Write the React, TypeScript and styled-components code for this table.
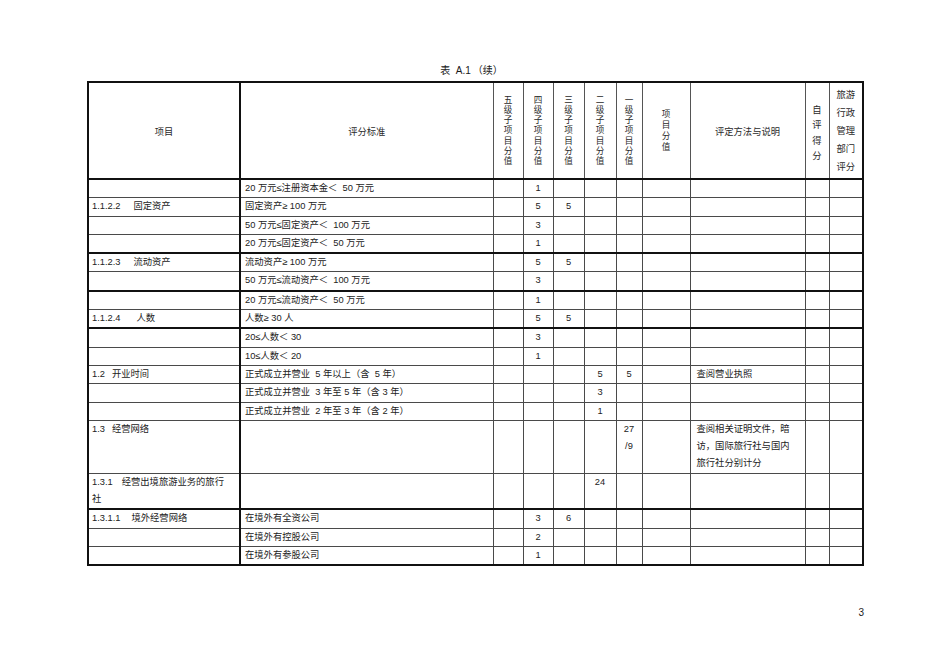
import React from "react";
import styled, { createGlobalStyle } from "styled-components";

// 表 A.1（续）旅行社评分表片段

const GlobalStyle = createGlobalStyle`
  html, body {
    margin: 0;
    padding: 0;
    background: #ffffff;
  }
  body {
    font-family: "Liberation Sans", "Noto Sans CJK SC", sans-serif;
    color: #222222;
  }
`;

type Row = {
  no?: string;
  label?: string[];
  gap?: number;
  criteria?: string;
  s5?: string;
  s4?: string;
  s3?: string;
  s2?: string;
  s1?: string[];
  score?: string;
  method?: string[];
  strong?: boolean;
};

const COLS = [152, 253, 30, 30, 31, 32, 26, 48, 115, 24, 34];

const ROWS: Row[] = [
  { criteria: "20 万元≤注册资本金＜  50 万元", s4: "1" },
  { no: "1.1.2.2", label: ["固定资产"], gap: 13, criteria: "固定资产≥ 100 万元", s4: "5", s3: "5" },
  { criteria: "50 万元≤固定资产＜  100 万元", s4: "3" },
  { criteria: "20 万元≤固定资产＜  50 万元", s4: "1" },
  { no: "1.1.2.3", label: ["流动资产"], gap: 13, criteria: "流动资产≥ 100 万元", s4: "5", s3: "5", strong: true },
  { criteria: "50 万元≤流动资产＜  100 万元", s4: "3" },
  { criteria: "20 万元≤流动资产＜  50 万元", s4: "1", strong: true },
  { no: "1.1.2.4", label: ["人数"], gap: 16, criteria: "人数≥ 30 人", s4: "5", s3: "5" },
  { criteria: "20≤人数＜ 30", s4: "3", strong: true },
  { criteria: "10≤人数＜ 20", s4: "1" },
  {
    no: "1.2",
    label: ["开业时间"],
    gap: 7,
    criteria: "正式成立并营业  5 年以上（含  5 年）",
    s2: "5",
    s1: ["5"],
    method: ["查阅营业执照"],
  },
  { criteria: "正式成立并营业  3 年至 5 年（含 3 年）", s2: "3" },
  { criteria: "正式成立并营业  2 年至 3 年（含 2 年）", s2: "1" },
  {
    no: "1.3",
    label: ["经营网络"],
    gap: 7,
    s1: ["27", "/9"],
    method: ["查阅相关证明文件，暗", "访，国际旅行社与国内", "旅行社分别计分"],
  },
  { no: "1.3.1", label: ["经营出境旅游业务的旅行", "社"], gap: 9, s2: "24" },
  { no: "1.3.1.1", label: ["境外经营网络"], gap: 11, criteria: "在境外有全资公司", s4: "3", s3: "6", strong: true },
  { criteria: "在境外有控股公司", s4: "2" },
  { criteria: "在境外有参股公司", s4: "1" },
];

const Lines = ({ items }: { items?: string[] }) => (
  <>
    {items?.map((t, i) => (
      <React.Fragment key={i}>
        {i > 0 && <br />}
        {t}
      </React.Fragment>
    ))}
  </>
);

const App = () => {
  return (
    <>
      <GlobalStyle />
      <Page>
        <Caption>
          表&nbsp;&nbsp;A.1&thinsp;（续）
        </Caption>
        <Sheet>
          <colgroup>
            {COLS.map((w, i) => (
              <Col key={i} $width={w} />
            ))}
          </colgroup>
          <thead>
            <tr>
              <HeadCell $strongRight>项目</HeadCell>
              <HeadCell>评分标准</HeadCell>
              <HeadCell>
                <Vertical text="五级子项目分值" step={10.1} />
              </HeadCell>
              <HeadCell>
                <Vertical text="四级子项目分值" step={10.1} />
              </HeadCell>
              <HeadCell>
                <Vertical text="三级子项目分值" step={10.1} />
              </HeadCell>
              <HeadCell>
                <Vertical text="二级子项目分值" step={10.1} />
              </HeadCell>
              <HeadCell>
                <Vertical text="一级子项目分值" step={10.1} />
              </HeadCell>
              <HeadCell>
                <Vertical text="项目分值" step={11} />
              </HeadCell>
              <HeadCell>评定方法与说明</HeadCell>
              <HeadCell>
                <Vertical text="自评得分" step={15.5} shift={6} />
              </HeadCell>
              <HeadCell>
                <Vertical text="旅游行政管理部门评分" step={18} per={2} />
              </HeadCell>
            </tr>
          </thead>
          <tbody>
            {ROWS.map((r, i) => (
              <BodyRow key={i} $strong={r.strong}>
                <Cell $pad={3} $strongRight>
                  {r.no && (
                    <>
                      <ItemNo $gap={r.gap ?? 8}>{r.no}</ItemNo>
                      <Lines items={r.label} />
                    </>
                  )}
                </Cell>
                <Cell $pad={4}>{r.criteria}</Cell>
                <Cell $center>{r.s5}</Cell>
                <Cell $center>{r.s4}</Cell>
                <Cell $center>{r.s3}</Cell>
                <Cell $center>{r.s2}</Cell>
                <Cell $center>
                  <Lines items={r.s1} />
                </Cell>
                <Cell $center>{r.score}</Cell>
                <Cell $pad={6}>
                  <Lines items={r.method} />
                </Cell>
                <Cell />
                <Cell />
              </BodyRow>
            ))}
          </tbody>
        </Sheet>
        <PageNo>3</PageNo>
      </Page>
    </>
  );
};

const Vertical = ({
  text,
  step,
  per = 1,
  shift = 0,
}: {
  text: string;
  step: number;
  per?: number;
  shift?: number;
}) => {
  const lines: string[] = [];
  for (let i = 0; i < text.length; i += per) lines.push(text.slice(i, i + per));
  return (
    <Stack $shift={shift} $small={per === 1 && step < 12}>
      {lines.map((l, i) => (
        <StackLine key={i} $step={step}>
          {l}
        </StackLine>
      ))}
    </Stack>
  );
};

const Page = styled.div`
  width: 950px;
  height: 672px;
  box-sizing: border-box;
  padding: 64px 0 0 87px;
  overflow: hidden;
`;

const Caption = styled.div`
  width: 769px;
  text-align: center;
  font-size: 10px;
  line-height: 14px;
  margin-bottom: 3px;
  color: #1a1a1a;
`;

const Sheet = styled.table`
  width: 775px;
  border-collapse: collapse;
  table-layout: fixed;
  border: 2px solid #111111;
  font-size: 9.3px;
`;

const Col = styled.col<{ $width: number }>`
  width: ${(p) => p.$width}px;
`;

const HeadCell = styled.th<{ $strongRight?: boolean }>`
  height: 95px;
  padding: 0;
  font-weight: normal;
  font-size: 9.3px;
  color: #2a2a2a;
  text-align: center;
  vertical-align: middle;
  border: 1px solid #555555;
  border-bottom: 2px solid #111111;
  ${(p) => p.$strongRight && "border-right: 2px solid #111111;"}
`;

const Stack = styled.div<{ $shift: number; $small: boolean }>`
  display: flex;
  flex-direction: column;
  align-items: center;
  padding-top: ${(p) => p.$shift}px;
  font-size: ${(p) => (p.$small ? "8.6px" : "9.3px")};
`;

const StackLine = styled.div<{ $step: number }>`
  line-height: ${(p) => p.$step}px;
  height: ${(p) => p.$step}px;
  white-space: nowrap;
`;

const BodyRow = styled.tr<{ $strong?: boolean }>`
  td {
    ${(p) => p.$strong && "border-top: 2px solid #111111;"}
  }
`;

const Cell = styled.td<{ $pad?: number; $center?: boolean; $strongRight?: boolean }>`
  padding: 0 ${(p) => p.$pad ?? 0}px;
  line-height: 17.3px;
  vertical-align: top;
  text-align: ${(p) => (p.$center ? "center" : "left")};
  white-space: pre;
  overflow: hidden;
  border: 1px solid #4a4a4a;
  ${(p) => p.$strongRight && "border-right: 2px solid #111111;"}
`;

const ItemNo = styled.span<{ $gap: number }>`
  margin-right: ${(p) => p.$gap}px;
`;

const PageNo = styled.div`
  width: 777px;
  margin-top: 40px;
  text-align: right;
  font-size: 10px;
  line-height: 14px;
`;

export default App;
